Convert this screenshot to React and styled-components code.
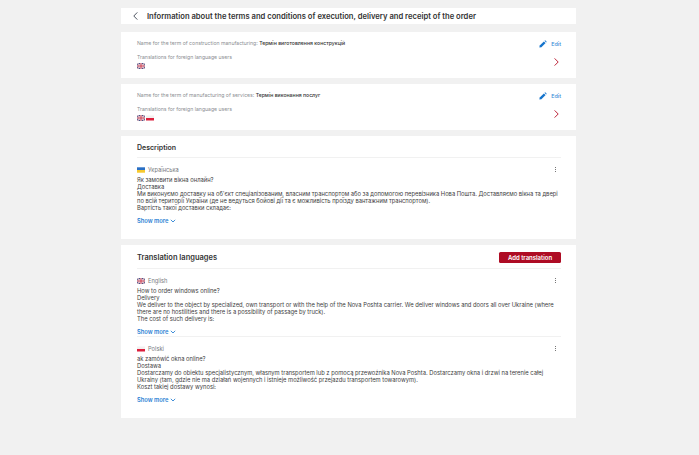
import React from 'react'
import styled, { createGlobalStyle } from 'styled-components'

const Global = createGlobalStyle`
  html, body { margin: 0; padding: 0; background: #f1f1f1; }
  body { font-family: Inter, "Noto Sans", "Liberation Sans", sans-serif; color: #2b2b2b; }
`

const Page = styled.div`
  width: 455px;
  height: 455px;
  margin-left: 121px;
  padding-top: 8px;
  box-sizing: border-box;
  display: flex;
  flex-direction: column;
  gap: 6px;
`

const HeaderCard = styled.div`
  height: 16px;
  margin-bottom: 2px;
  background: #fff;
  display: flex;
  align-items: center;
  gap: 9px;
  padding-left: 12px;
`

const HeaderTitle = styled.h1`
  margin: 0;
  font-size: 7.63px;
  font-weight: 600;
  color: #333;
  white-space: nowrap;
`

const TermCard = styled.section`
  height: 46px;
  background: #fff;
  box-sizing: border-box;
  padding: 8px 15px 0 16px;
  display: flex;
  justify-content: space-between;
`

const TermInfo = styled.div`
  display: flex;
  flex-direction: column;
`

const TermName = styled.div`
  font-size: 5.15px;
  line-height: 7px;
  color: #8d8f94;
  white-space: nowrap;
`

const TermValue = styled.span`
  color: #333;
  font-weight: 500;
`

const TranslationsLabel = styled(TermName)`
  margin-top: 7px;
`

const Flags = styled.div`
  display: flex;
  gap: 1px;
  margin-top: 2px;
`

const TermActions = styled.div`
  display: flex;
  flex-direction: column;
  align-items: flex-end;
`

const EditLink = styled.div`
  display: flex;
  align-items: center;
  gap: 4px;
  height: 7px;
  font-size: 5.4px;
  font-weight: 500;
  color: #3b8ad6;
`

const ArrowWrap = styled.div`
  margin-top: 11px;
  margin-right: 2px;
  height: 8px;
`

const Card = styled.section`
  background: #fff;
  box-sizing: border-box;
  padding: 0 15px 0 16px;
  height: ${p => p.$height}px;
`

const CardHead = styled.div`
  height: ${p => p.$height}px;
  padding-top: 1px;
  display: flex;
  align-items: center;
  justify-content: space-between;
  border-bottom: 1px solid #f1f1f1;
  box-sizing: border-box;
`

const CardTitle = styled.h2`
  margin: 0;
  font-size: ${p => p.$size}px;
  font-weight: 600;
  color: #333;
`

const AddButton = styled.button`
  width: 62px;
  height: 11px;
  padding: 0;
  border: 0;
  border-radius: 1.5px;
  background: #ae0c24;
  color: #fff;
  font-family: inherit;
  font-size: 6px;
  font-weight: 600;
`

const Block = styled.div`
  height: ${p => p.$height}px;
  box-sizing: border-box;
  padding-top: 8px;
  border-bottom: ${p => (p.$line ? '1px solid #f1f1f1' : '0')};
`

const LangRow = styled.div`
  display: flex;
  align-items: center;
  justify-content: space-between;
  height: 7px;
`

const Lang = styled.div`
  display: flex;
  align-items: center;
  gap: 3px;
  font-size: 5.7px;
  color: #77797d;
`

const Dots = styled.div`
  display: flex;
  flex-direction: column;
  gap: 1.2px;
  margin-right: 5px;
`

const Dot = styled.i`
  width: 1px;
  height: 1px;
  background: #777;
  display: block;
`

const Body = styled.div`
  margin-top: 2.5px;
  font-size: 5.8px;
  line-height: 7.1px;
  color: #3d3d3d;
  white-space: nowrap;
`

const ShowMore = styled.div`
  display: flex;
  align-items: center;
  gap: 2px;
  margin-top: 5.7px;
  font-size: 5.8px;
  line-height: 8px;
  font-weight: 600;
  color: #2b82d4;
`

const UkFlag = () => (
  <svg width="8" height="6" viewBox="0 0 8 6">
    <defs>
      <clipPath id="ukclip"><rect width="8" height="6" rx="1.5" /></clipPath>
    </defs>
    <g clipPath="url(#ukclip)">
      <rect width="8" height="6" fill="#3f4f86" />
      <path d="M0 0L8 6M8 0L0 6" stroke="#fff" strokeWidth="1.2" />
      <path d="M0 0L8 6M8 0L0 6" stroke="#c8283c" strokeWidth=".4" />
      <path d="M4 0V6M0 3H8" stroke="#fff" strokeWidth="1.6" />
      <path d="M4 0V6M0 3H8" stroke="#c8283c" strokeWidth=".9" />
    </g>
  </svg>
)

const PlFlag = () => (
  <svg width="8" height="6" viewBox="0 0 8 6">
    <rect y="0.5" width="8" height="2.5" fill="#f3f0f0" />
    <rect y="3" width="8" height="2.5" fill="#dc1f3c" />
  </svg>
)

const UaFlag = () => (
  <svg width="8" height="6" viewBox="0 0 8 6">
    <rect y="0.3" width="8" height="2.7" fill="#2a6fc4" />
    <rect y="3" width="8" height="2.7" fill="#f7c92e" />
  </svg>
)

const Pencil = () => (
  <svg width="8" height="8" viewBox="0 0 8 8">
    <path d="M0.4 7.6L0.7 5.6L4.9 1.4L6.6 3.1L2.4 7.3Z" fill="#1574cc" />
    <path d="M5.5 0.8L6.2 0.3L7.7 1.8L7.2 2.5Z" fill="#1574cc" />
  </svg>
)

const Chevron = () => (
  <svg width="5" height="8" viewBox="0 0 5 8" fill="none" display="block">
    <path d="M0.6 0.4L4.2 4L0.6 7.6" stroke="#bd2439" strokeWidth="1" />
  </svg>
)

const Back = () => (
  <svg width="5" height="8" viewBox="0 0 5 8" fill="none">
    <path d="M4.3 0.4L0.8 4L4.3 7.6" stroke="#4f5662" strokeWidth="1" />
  </svg>
)

const Caret = () => (
  <svg width="6" height="4" viewBox="0 0 6 4" fill="none">
    <path d="M0.8 0.8L3 3L5.2 0.8" stroke="#2b82d4" strokeWidth="0.9" />
  </svg>
)

const Term = ({ label, value, flags }) => (
  <TermCard>
    <TermInfo>
      <TermName>{label}: <TermValue>{value}</TermValue></TermName>
      <TranslationsLabel>Translations for foreign language users</TranslationsLabel>
      <Flags>{flags}</Flags>
    </TermInfo>
    <TermActions>
      <EditLink><Pencil />Edit</EditLink>
      <ArrowWrap><Chevron /></ArrowWrap>
    </TermActions>
  </TermCard>
)

const Entry = ({ flag, lang, lines, height, line }) => (
  <Block $height={height} $line={line}>
    <LangRow>
      <Lang>{flag}{lang}</Lang>
      <Dots><Dot /><Dot /><Dot /></Dots>
    </LangRow>
    <Body>
      {lines.map(l => <div key={l}>{l}</div>)}
    </Body>
    <ShowMore>Show more <Caret /></ShowMore>
  </Block>
)

export default function App() {
  return (
    <Page>
      <Global />
      <HeaderCard>
        <Back />
        <HeaderTitle>Information about the terms and conditions of execution, delivery and receipt of the order</HeaderTitle>
      </HeaderCard>
      <Term
        label="Name for the term of construction manufacturing"
        value="Термін виготовлення конструкцій"
        flags={<UkFlag />}
      />
      <Term
        label="Name for the term of manufacturing of services"
        value="Термін виконання послуг"
        flags={<><UkFlag /><PlFlag /></>}
      />
      <Card $height={103}>
        <CardHead $height={22}><CardTitle $size={7}>Description</CardTitle></CardHead>
        <Entry
          height={81}
          flag={<UaFlag />}
          lang="Українська"
          lines={[
            'Як замовити вікна онлайн?',
            'Доставка',
            'Ми виконуємо доставку на об\'єкт спеціалізованим, власним транспортом або за допомогою перевізника Нова Пошта. Доставляємо вікна та двері',
            'по всій території України (де не ведуться бойові дії та є можливість проїзду вантажним транспортом).',
            'Вартість такої доставки складає:',
          ]}
        />
      </Card>
      <Card $height={173}>
        <CardHead $height={24}>
          <CardTitle $size={7.5}>Translation languages</CardTitle>
          <AddButton>Add translation</AddButton>
        </CardHead>
        <Entry
          height={68}
          line
          flag={<UkFlag />}
          lang="English"
          lines={[
            'How to order windows online?',
            'Delivery',
            'We deliver to the object by specialized, own transport or with the help of the Nova Poshta carrier. We deliver windows and doors all over Ukraine (where',
            'there are no hostilities and there is a possibility of passage by truck).',
            'The cost of such delivery is:',
          ]}
        />
        <Entry
          height={70}
          flag={<PlFlag />}
          lang="Polski"
          lines={[
            'ak zamówić okna online?',
            'Dostawa',
            'Dostarczamy do obiektu specjalistycznym, własnym transportem lub z pomocą przewoźnika Nova Poshta. Dostarczamy okna i drzwi na terenie całej',
            'Ukrainy (tam, gdzie nie ma działań wojennych i istnieje możliwość przejazdu transportem towarowym).',
            'Koszt takiej dostawy wynosi:',
          ]}
        />
      </Card>
    </Page>
  )
}
